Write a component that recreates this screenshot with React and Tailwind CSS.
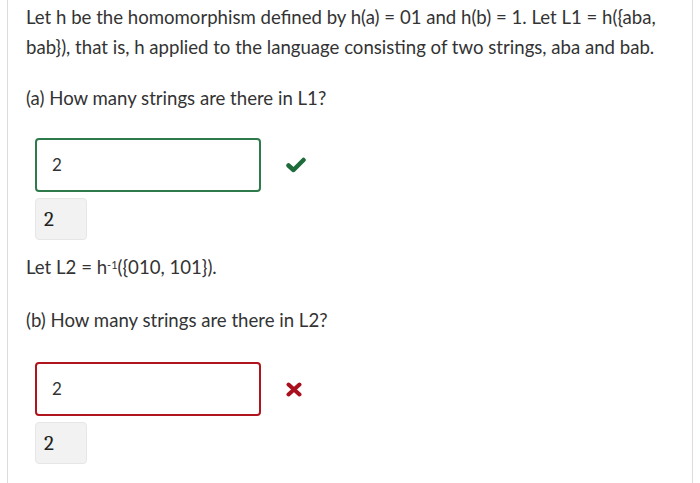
import React from 'react';

function Check() {
  return (
    <svg width="20" height="16" viewBox="0 0 20 16" className="ml-[25px]">
      <path d="M2.5 8.5 L7.5 13 L17.5 3" fill="none" stroke="#1e6b3c" strokeWidth="4.5" strokeLinecap="round" strokeLinejoin="round" />
    </svg>
  );
}

function Cross() {
  return (
    <svg width="16" height="15" viewBox="0 0 16 15" className="ml-[25px]">
      <path d="M2.5 2.5 L13.5 12.5 M13.5 2.5 L2.5 12.5" fill="none" stroke="#a8101d" strokeWidth="4" strokeLinecap="round" />
    </svg>
  );
}

function Answer({ value, correct }) {
  return (
    <div className="ml-[9px]">
      <div className="flex items-center">
        <div
          className={
            correct
              ? 'w-[226px] h-[54px] rounded-[4px] border-2 border-[#2f7a4b] flex items-center pl-[15px] text-[17px] text-[#333]'
              : 'w-[226px] h-[54px] rounded-[4px] border-2 border-[#b0141f] flex items-center pl-[15px] text-[17px] text-[#333]'
          }
        >
          {value}
        </div>
        {correct ? <Check /> : <Cross />}
      </div>
      <div className="mt-[6px] w-[52px] h-[42px] rounded-[4px] bg-[#f2f2f2] border border-[#e6e6e6] flex items-center pl-[8px] text-[21px] text-[#222] font-serif">
        {value}
      </div>
    </div>
  );
}

export default function App() {
  return (
    <div className="w-[700px] h-[483px] bg-white overflow-hidden font-['Lato',sans-serif] text-[#333]">
      <div className="mx-[7px] h-full border-x border-[#dcdcdc] pl-[18px] pt-[2px] text-[18.6px] leading-[30px]">
        <p>
          Let h be the homomorphism defined by h(a) = 01 and h(b) = 1. Let L1 = h({'{'}aba,
          <br />
          bab{'}'}), that is, h applied to the language consisting of two strings, aba and bab.
        </p>
        <p className="mt-[21px]">(a) How many strings are there in L1?</p>
        <div className="mt-[25px]">
          <Answer value="2" correct />
        </div>
        <p className="mt-[12px]">
          Let L2 = h<sup className="text-[11px]">-1</sup>({'{'}010, 101{'}'}).
        </p>
        <p className="mt-[23px]">(b) How many strings are there in L2?</p>
        <div className="mt-[27px]">
          <Answer value="2" correct={false} />
        </div>
      </div>
    </div>
  );
}
